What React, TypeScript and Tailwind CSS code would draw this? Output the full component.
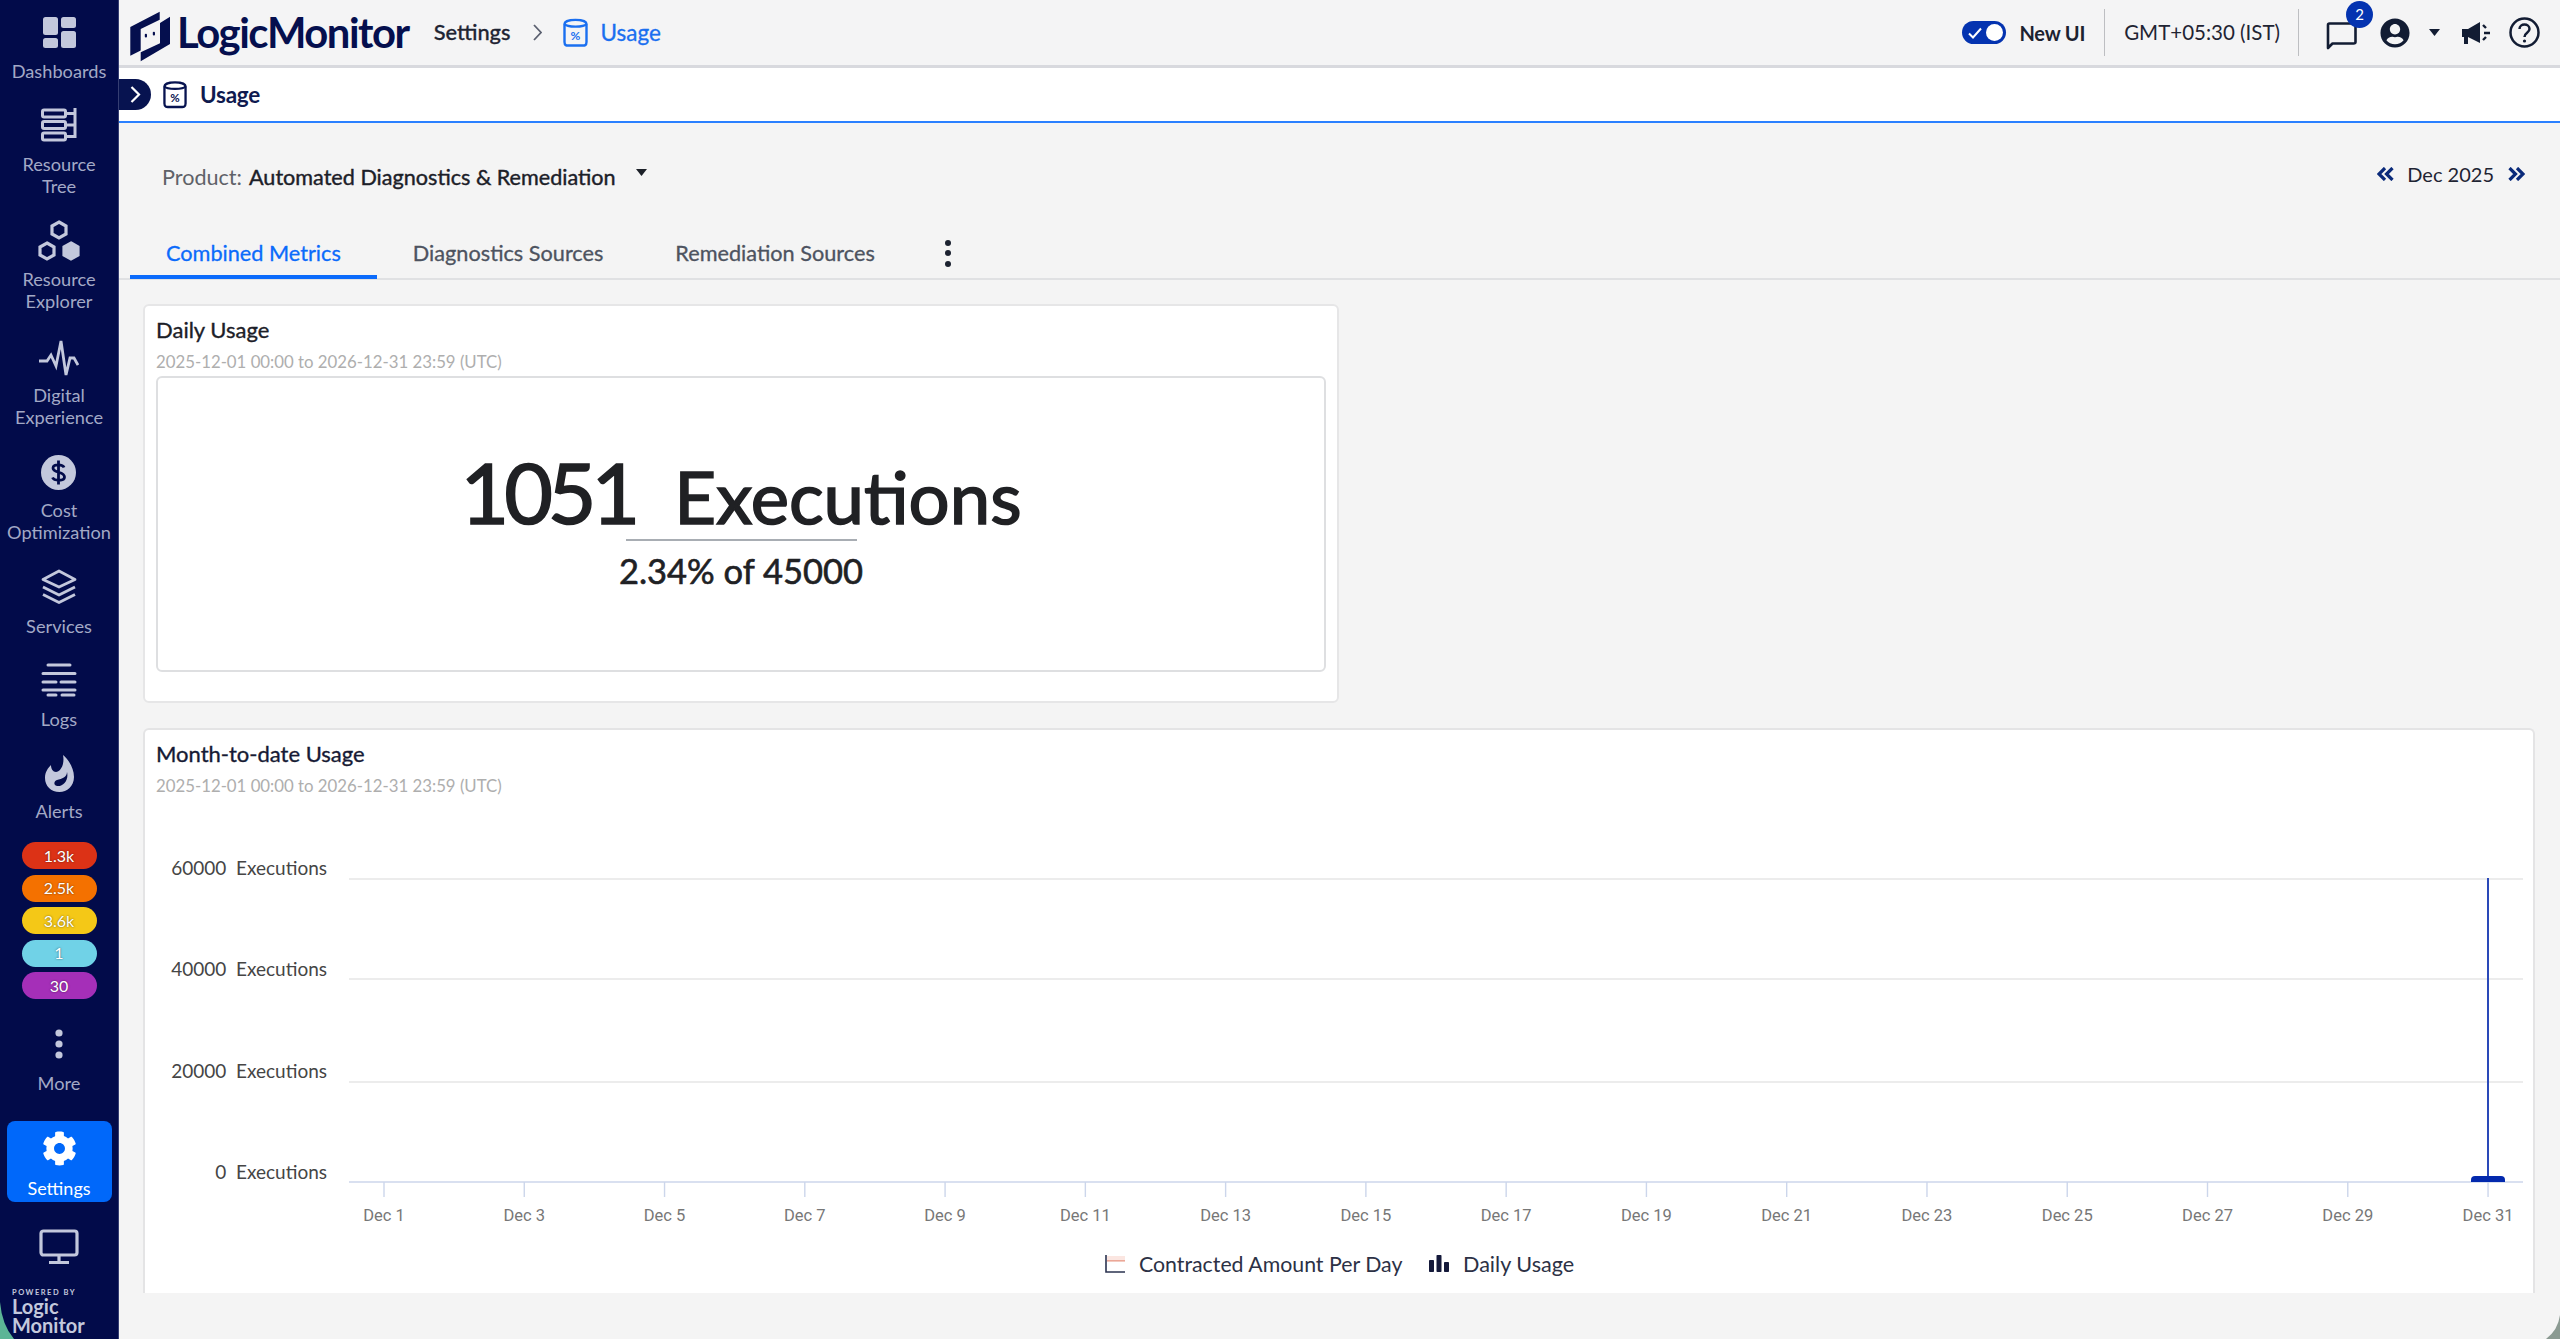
import React from "react";
import { FaCog, FaUserCircle } from "react-icons/fa";

const ICON = "#c3c8dc";

function UsageIcon({ color, w, h }: { color: string; w: number; h: number }) {
  return (
    <svg width={w} height={h} viewBox="0 0 25 29" fill="none">
      <path d="M1.5 6 C1.5 0.5 23.5 0.5 23.5 6 V24 C23.5 28 21 27.5 19 27.5 H6 C4 27.5 1.5 28 1.5 24 Z" stroke={color} strokeWidth="2.4" />
      <path d="M1.5 6 C4 9.5 21 9.5 23.5 6" stroke={color} strokeWidth="2.4" />
      <text x="12.5" y="22" textAnchor="middle" fontSize="12" fontFamily="Lato, sans-serif" fontWeight="700" fill={color}>%</text>
    </svg>
  );
}

function Logo() {
  return (
    <svg width="41" height="58" viewBox="0 0 41 58" fill="#050f4e">
      <polygon points="0.3,23 29.7,7.7 29.7,15.7 10.7,25 10.7,46.5 0.3,51.7" />
      <polygon points="40,12.7 40,40 10.7,57.3 10.7,48.3 30,39.3 30,19" />
      <rect x="14.8" y="29.8" width="2.2" height="3.6" rx="1" />
      <rect x="22.8" y="27.8" width="2.2" height="3.6" rx="1" />
    </svg>
  );
}

const icons: Record<string, React.ReactNode> = {
  dash: (
    <svg width="33" height="31" viewBox="0 0 33 31" fill={ICON}>
      <rect x="0" y="0" width="15" height="18" rx="2.5" />
      <rect x="18" y="0" width="15" height="11" rx="2.5" />
      <rect x="0" y="21" width="15" height="10" rx="2.5" />
      <rect x="18" y="14" width="15" height="17" rx="2.5" />
    </svg>
  ),
  tree: (
    <svg width="36" height="36" viewBox="0 0 36 36" fill="none" stroke={ICON} strokeWidth="3">
      <rect x="1.5" y="3" width="23" height="7" rx="1.5" />
      <rect x="1.5" y="14.5" width="23" height="7" rx="1.5" />
      <rect x="1.5" y="26" width="23" height="7" rx="1.5" />
      <path d="M24 6.5 H34 M24 18 H34 M24 29.5 H34 M34 1 V31" />
    </svg>
  ),
  explorer: (
    <svg width="44" height="41" viewBox="0 0 44 41" fill="none" stroke={ICON} strokeWidth="3.2">
      <polygon points="22,2 29,6 29,14 22,18 15,14 15,6" />
      <polygon points="10,23 17,27 17,35 10,39 3,35 3,27" />
      <polygon points="34,23 41,27 41,35 34,39 27,35 27,27" fill={ICON} />
    </svg>
  ),
  pulse: (
    <svg width="40" height="39" viewBox="0 0 40 39" fill="none" stroke={ICON} strokeWidth="2.8" strokeLinejoin="miter">
      <polyline points="0,22 8,22 12,16 17,27 22,2 27,36 31,19 35,19 39,26" />
    </svg>
  ),
  cost: (
    <svg width="35" height="35" viewBox="0 0 35 35">
      <circle cx="17.5" cy="17.5" r="17.5" fill={ICON} />
      <path d="M23 12.5 C22 9.5 12 8.5 12 13 C12 18.5 23.5 16 23.5 22 C23.5 26.5 13 26 11.5 22.5 M17.5 5.5 V29.5" fill="none" stroke="#020b4a" strokeWidth="2.8" />
    </svg>
  ),
  layers: (
    <svg width="36" height="36" viewBox="0 0 36 36" fill="none" stroke={ICON} strokeWidth="2.8" strokeLinejoin="round">
      <polygon points="18,2 34,10.5 18,18 2,10.5" />
      <path d="M2 18 L18 26 L34 18" />
      <path d="M2 25.5 L18 33.5 L34 25.5" />
    </svg>
  ),
  logs: (
    <svg width="36" height="34" viewBox="0 0 36 34" fill="none" stroke={ICON} strokeWidth="3" strokeLinecap="round">
      <path d="M7 2 H29 M2 10.5 H34 M2 19 H15 M20 19 H34 M2 27 H34 M7 32 H15 M21 32 H33" />
    </svg>
  ),
  flame: (
    <svg width="29" height="37" viewBox="0 0 29 37">
      <path fillRule="evenodd" fill={ICON} d="M18 0 C22 3 29 12 29 22 C29 31 22 37 14.5 37 C6 37 0 31 0 23 C0 17 3 13 6 10 C6 14 8 17 11 17 C15 17 20 10 18 0 Z M22 17 C22 22 17 24 12 25 C9 26 8 30 12 31 C18 32 24 25 22 17 Z" />
    </svg>
  ),
  more: (
    <svg width="8" height="30" viewBox="0 0 8 30" fill={ICON}>
      <circle cx="4" cy="4" r="3.6" />
      <circle cx="4" cy="15" r="3.6" />
      <circle cx="4" cy="26" r="3.6" />
    </svg>
  ),
};

function NavItem({ icon, label, cls, labelCls = "mt-[8px]" }: { icon: string; label: string[]; cls: string; labelCls?: string }) {
  return (
    <div className={`flex shrink-0 flex-col items-center ${cls}`}>
      <div className="flex h-[40px] items-center justify-center">{icons[icon]}</div>
      <div className={`text-center text-[18.2px] leading-[22.5px] text-[#a3a9c6] ${labelCls}`}>
        {label.map((l) => (
          <div key={l}>{l}</div>
        ))}
      </div>
    </div>
  );
}

function Badge({ text, bg }: { text: string; bg: string }) {
  return (
    <div className={`flex h-[27px] w-[75px] items-center justify-center rounded-full text-[16px] text-white [text-shadow:0_0_2px_rgba(0,0,0,0.6)] ${bg}`}>
      {text}
    </div>
  );
}

function Sidebar() {
  return (
    <aside className="flex h-[1339px] w-[119px] shrink-0 flex-col items-center overflow-hidden border-r border-[#353e72] bg-[#020b4a]">
      <NavItem icon="dash" label={["Dashboards"]} cls="mt-[12px]" />
      <NavItem icon="tree" label={["Resource", "Tree"]} cls="mt-[22px]" />
      <NavItem icon="explorer" label={["Resource", "Explorer"]} cls="mt-[23px]" labelCls="mt-[7px]" />
      <NavItem icon="pulse" label={["Digital", "Experience"]} cls="mt-[26px]" labelCls="mt-[5px]" />
      <NavItem icon="cost" label={["Cost", "Optimization"]} cls="mt-[23.5px]" labelCls="mt-[6.5px]" />
      <NavItem icon="layers" label={["Services"]} cls="mt-[23px]" />
      <NavItem icon="logs" label={["Logs"]} cls="mt-[23px]" />
      <NavItem icon="flame" label={["Alerts"]} cls="mt-[23px]" labelCls="mt-[6px]" />
      <div className="mt-[20px] flex shrink-0 flex-col gap-[5.5px]">
        <Badge text="1.3k" bg="bg-[#dc3216]" />
        <Badge text="2.5k" bg="bg-[#f47100]" />
        <Badge text="3.6k" bg="bg-[#f4c817]" />
        <Badge text="1" bg="bg-[#70d2e7]" />
        <Badge text="30" bg="bg-[#a52fb8]" />
      </div>
      <NavItem icon="more" label={["More"]} cls="mt-[25px]" />
      <div className="mt-[26px] flex h-[81px] w-[105px] shrink-0 flex-col items-center rounded-[8px] bg-[#0068fa] pt-[10px]">
        <FaCog className="h-[35px] w-[35px] text-white" />
        <div className="mt-[11px] text-[18px] leading-[22px] text-white">Settings</div>
      </div>
      <div className="mt-[27px] shrink-0">
        <svg className="block" width="40" height="36" viewBox="0 0 40 36" fill="none" stroke={ICON} strokeWidth="3.2">
          <rect x="2" y="2" width="36" height="24" rx="2.5" />
          <path d="M20 26 V33 M10 33.5 H30" />
        </svg>
      </div>
      <div className="mt-[24px] w-full shrink-0 pl-[12px] text-[#c3c8dc]">
        <div className="text-[7.5px] font-bold leading-[8px] tracking-[0.2em]">POWERED BY</div>
        <div className="text-[20px] font-bold leading-[19px]">Logic</div>
        <div className="text-[20px] font-bold leading-[19px]">Monitor</div>
      </div>
    </aside>
  );
}

function Header() {
  return (
    <header className="flex h-[68px] shrink-0 items-center border-b-[3px] border-[#d8d9de] bg-[#f4f4f5]">
      <div className="ml-[11px] flex items-center">
        <Logo />
      </div>
      <div className="ml-[6px] text-[41.8px] font-bold leading-none tracking-[-0.035em] text-[#050f4e]">LogicMonitor</div>
      <div className="ml-[25px] text-[21.8px] font-medium text-[#1f2433] [-webkit-text-stroke:0.3px_#1f2433]">Settings</div>
      <svg className="ml-[23px]" width="9" height="17" viewBox="0 0 9 17" fill="none" stroke="#5b6070" strokeWidth="1.8"><path d="M1 1 L8 8.5 L1 16" /></svg>
      <div className="ml-[21px]"><UsageIcon color="#1a6ff0" w={25} h={29} /></div>
      <div className="ml-[12px] text-[22.5px] text-[#1a6ff0] [-webkit-text-stroke:0.3px_#1a6ff0]">Usage</div>
      <div className="ml-auto flex items-center pr-[20px]">
        <div className="flex h-[23px] w-[44px] items-center justify-between rounded-full bg-[#0433b0] pl-[6px] pr-[3px]">
          <svg width="14" height="12" viewBox="0 0 14 12" fill="none" stroke="#fff" strokeWidth="2"><path d="M1 6.5 L5 10.5 L13 1.5" /></svg>
          <div className="h-[17px] w-[17px] rounded-full bg-white" />
        </div>
        <div className="ml-[13px] text-[20px] font-bold tracking-[-0.01em] text-[#1c2230]">New UI</div>
        <div className="mx-[19px] h-[47px] w-px bg-[#bdbec2]" />
        <div className="text-[20.5px] text-[#1f2433]">GMT+05:30 (IST)</div>
        <div className="ml-[18px] h-[47px] w-px bg-[#bdbec2]" />
        <div className="relative ml-[27px]">
          <svg className="mt-[6px] block" width="31" height="28" viewBox="0 0 31 28" fill="none" stroke="#121c33" strokeWidth="2.6">
            <path d="M2 26 V3 C2 2 2.5 1.5 3.5 1.5 H27.5 C28.5 1.5 29.5 2 29.5 3 V20 C29.5 21 28.5 21.5 27.5 21.5 H6.5 Z" strokeLinejoin="round" />
          </svg>
          <div className="absolute left-[20px] top-[-15px] flex h-[27px] w-[27px] items-center justify-center rounded-full bg-[#0433b0] text-[15px] text-white">2</div>
        </div>
        <FaUserCircle className="ml-[23px] h-[30px] w-[30px] text-[#121c33]" />
        <svg className="ml-[19px]" width="11" height="7" viewBox="0 0 11 7" fill="#121c33"><polygon points="0,0 11,0 5.5,7" /></svg>
        <svg className="ml-[22px]" width="29" height="22" viewBox="0 0 29 22" fill="#121c33">
          <path d="M0 7 H6 L18 0 V21 L6 15 V22 H2 V15 H0 Z" />
          <path d="M21 3 L24 6 M22 11 H28 M21 18 L24 15" stroke="#121c33" strokeWidth="2.4" />
        </svg>
        <svg className="ml-[18px]" width="31" height="31" viewBox="0 0 31 31" fill="none" stroke="#121c33" strokeWidth="2.5">
          <circle cx="15.5" cy="15.5" r="14" />
          <path d="M10.5 12 C10.5 6 20.5 6 20.5 12 C20.5 16 15.5 15.5 15.5 20" />
          <circle cx="15.5" cy="24" r="1.6" fill="#121c33" stroke="none" />
        </svg>
      </div>
    </header>
  );
}

function SubHeader() {
  return (
    <div className="flex h-[55px] shrink-0 items-center border-b-2 border-[#2a80ff] bg-white">
      <div className="flex h-[31px] w-[32px] items-center justify-center rounded-r-full bg-[#071350]">
        <svg width="11" height="17" viewBox="0 0 11 17" fill="none" stroke="#fff" strokeWidth="2.2"><path d="M1.5 1 L9 8.5 L1.5 16" /></svg>
      </div>
      <div className="ml-[12px]"><UsageIcon color="#071350" w={24} h={29} /></div>
      <div className="ml-[13px] text-[22.5px] font-bold tracking-[-0.01em] text-[#0f1a4f]">Usage</div>
    </div>
  );
}

function ProductRow() {
  return (
    <div className="flex h-[110px] shrink-0 items-center justify-between">
      <div className="mb-[2px] ml-[43px] flex items-center">
        <span className="text-[21.6px] text-[#5f6268]">Product:</span>
        <span className="ml-[7px] text-[21.6px] text-[#1c2028] [-webkit-text-stroke:0.4px_#1c2028]">Automated Diagnostics &amp; Remediation</span>
        <svg className="mb-[8px] ml-[20px]" width="11" height="7" viewBox="0 0 11 7" fill="#1c2028"><polygon points="0,0 11,0 5.5,7" /></svg>
      </div>
      <div className="mb-[8px] mr-[35px] flex items-center">
        <svg width="17" height="14" viewBox="0 0 17 14" fill="none" stroke="#0a2a7a" strokeWidth="3.2"><path d="M8 1 L2 7 L8 13 M15.5 1 L9.5 7 L15.5 13" /></svg>
        <span className="ml-[13px] text-[20px] text-[#1f2433]">Dec 2025</span>
        <svg className="ml-[14px]" width="17" height="14" viewBox="0 0 17 14" fill="none" stroke="#0a2a7a" strokeWidth="3.2"><path d="M1.5 1 L7.5 7 L1.5 13 M9 1 L15 7 L9 13" /></svg>
      </div>
    </div>
  );
}

function Tabs() {
  return (
    <div className="flex h-[47px] shrink-0 items-stretch border-b-[2px] border-[#e0e1e3] pl-[11px]">
      <div className="mb-[-1px] flex items-center border-b-[4px] border-[#0b6bfb] px-[36px] pb-[2px] text-[21.7px] text-[#0b6bfb] [-webkit-text-stroke:0.3px_#0b6bfb]">Combined Metrics</div>
      <div className="mb-[-1px] flex items-center border-b-[4px] border-transparent px-[36px] pb-[2px] text-[21.7px] text-[#4d5360] [-webkit-text-stroke:0.3px_#4d5360]">Diagnostics Sources</div>
      <div className="mb-[-1px] flex items-center border-b-[4px] border-transparent px-[36px] pb-[2px] text-[21.7px] text-[#4d5360] [-webkit-text-stroke:0.3px_#4d5360]">Remediation Sources</div>
      <div className="ml-[34px] flex flex-col items-center justify-center gap-[4.5px] pb-[5px]">
        <div className="h-[6px] w-[6px] rounded-full bg-[#1c2230]" />
        <div className="h-[6px] w-[6px] rounded-full bg-[#1c2230]" />
        <div className="h-[6px] w-[6px] rounded-full bg-[#1c2230]" />
      </div>
    </div>
  );
}

function CardTitle({ title, sub, dark }: { title: string; sub: string; dark?: boolean }) {
  return (
    <>
      <div className={`text-[22px] leading-[24px] [-webkit-text-stroke:0.35px_#1c2028] ${dark ? "text-[#14193a]" : "text-[#1c2028]"}`}>{title}</div>
      <div className="mt-[9px] text-[16.8px] leading-[22px] text-[#aeaeae]">{sub}</div>
    </>
  );
}

function DailyCard() {
  return (
    <section className="ml-[24px] mt-[24px] h-[399px] w-[1196px] rounded-[6px] border-2 border-[#e6e6e7] bg-white px-[11px] pt-[12px]">
      <CardTitle title="Daily Usage" sub="2025-12-01 00:00 to 2026-12-31 23:59 (UTC)" />
      <div className="mt-[3px] flex h-[296px] flex-col items-center rounded-[6px] border-2 border-[#dedfe1] pt-[68px]">
        <div className="flex items-baseline leading-[92px] text-[#202124] [-webkit-text-stroke:1.6px_#202124]">
          <span className="text-[84px] tracking-[-5px]">1051</span>
          <span className="ml-[39px] text-[72.5px]">Executions</span>
        </div>
        <div className="mt-[-3px] h-[2px] w-[231px] bg-[#a8adb3]" />
        <div className="mt-[8px] text-[34.5px] leading-[44px] text-[#202124] [-webkit-text-stroke:0.6px_#202124]">2.34% of 45000</div>
      </div>
    </section>
  );
}

function Chart() {
  const ticks = Array.from({ length: 16 }, (_, i) => ({ x: 384 + i * 140.27, label: `Dec ${1 + i * 2}` }));
  const ys = [
    { y: 879, label: "60000", ty: 875 },
    { y: 979, label: "40000", ty: 976 },
    { y: 1082, label: "20000", ty: 1078 },
  ];
  return (
    <svg className="block" width="2388" height="483" viewBox="145 810 2388 483">
      {ys.map((g) => (
        <g key={g.label}>
          <line x1="349" x2="2523" y1={g.y} y2={g.y} stroke="#e6e6e6" strokeWidth="1.6" />
          <text x="327" y={g.ty} textAnchor="end" fontSize="19" fontFamily="Lato, sans-serif" fill="#454545" xmlSpace="preserve">{g.label}  Executions</text>
        </g>
      ))}
      <text x="327" y="1179" textAnchor="end" fontSize="19" fontFamily="Lato, sans-serif" fill="#454545" xmlSpace="preserve">0  Executions</text>
      <line x1="349" x2="2523" y1="1182" y2="1182" stroke="#ccd6eb" strokeWidth="1.6" />
      {ticks.map((t) => (
        <g key={t.label}>
          <line x1={t.x} x2={t.x} y1="1182" y2="1197" stroke="#ccd6eb" strokeWidth="1.4" />
          <text x={t.x} y="1221" textAnchor="middle" fontSize="16.5" fontFamily="Roboto, sans-serif" fill="#777777">{t.label}</text>
        </g>
      ))}
      <line x1="2488" x2="2488" y1="878" y2="1178" stroke="#2a49b8" strokeWidth="2" />
      <path d="M2471 1182 V1180 Q2471 1176 2475 1176 H2501 Q2505 1176 2505 1180 V1182 Z" fill="#0329ad" />
      <g>
        <rect x="1107" y="1256" width="18" height="5" fill="#fbe6e1" />
        <rect x="1107" y="1260" width="18" height="1.6" fill="#eba797" />
        <path d="M1106 1255 V1272 H1125" fill="none" stroke="#2b3350" strokeWidth="1.6" />
        <text x="1139" y="1272" fontSize="21.3" fontFamily="Lato, sans-serif" fill="#2c3145">Contracted Amount Per Day</text>
        <rect x="1429" y="1260" width="5" height="12" rx="0.8" fill="#14193a" />
        <rect x="1436.5" y="1255" width="5" height="17" rx="0.8" fill="#14193a" />
        <rect x="1444" y="1262" width="5" height="10" rx="0.8" fill="#14193a" />
        <text x="1463" y="1272" fontSize="21.6" fontFamily="Lato, sans-serif" fill="#2c3145">Daily Usage</text>
      </g>
    </svg>
  );
}

function MonthCard() {
  return (
    <section className="ml-[24px] mt-[25px] h-[565px] w-[2392px] rounded-t-[6px] border-x-2 border-t-2 border-[#e4e4e5] bg-white">
      <div className="px-[11px] pb-[13px] pt-[12px]">
        <CardTitle title="Month-to-date Usage" sub="2025-12-01 00:00 to 2026-12-31 23:59 (UTC)" dark />
      </div>
      <Chart />
    </section>
  );
}

export default function App() {
  return (
    <div className="relative flex h-[1339px] w-[2560px] overflow-hidden bg-[#f4f4f4] font-['Lato',sans-serif]">
      <Sidebar />
      <main className="flex min-w-0 flex-1 flex-col">
        <Header />
        <SubHeader />
        <ProductRow />
        <Tabs />
        <DailyCard />
        <MonthCard />
      </main>
      <svg className="absolute bottom-0 left-0" width="14" height="37" viewBox="0 0 14 37"><path d="M0 0 Q2 23 14 37 L0 37 Z" fill="#5cb596" /></svg>
      <svg className="absolute bottom-0 right-0" width="14" height="24" viewBox="0 0 14 24"><path d="M14 0 Q12 15 0 24 L14 24 Z" fill="#8b9a92" /></svg>
    </div>
  );
}
